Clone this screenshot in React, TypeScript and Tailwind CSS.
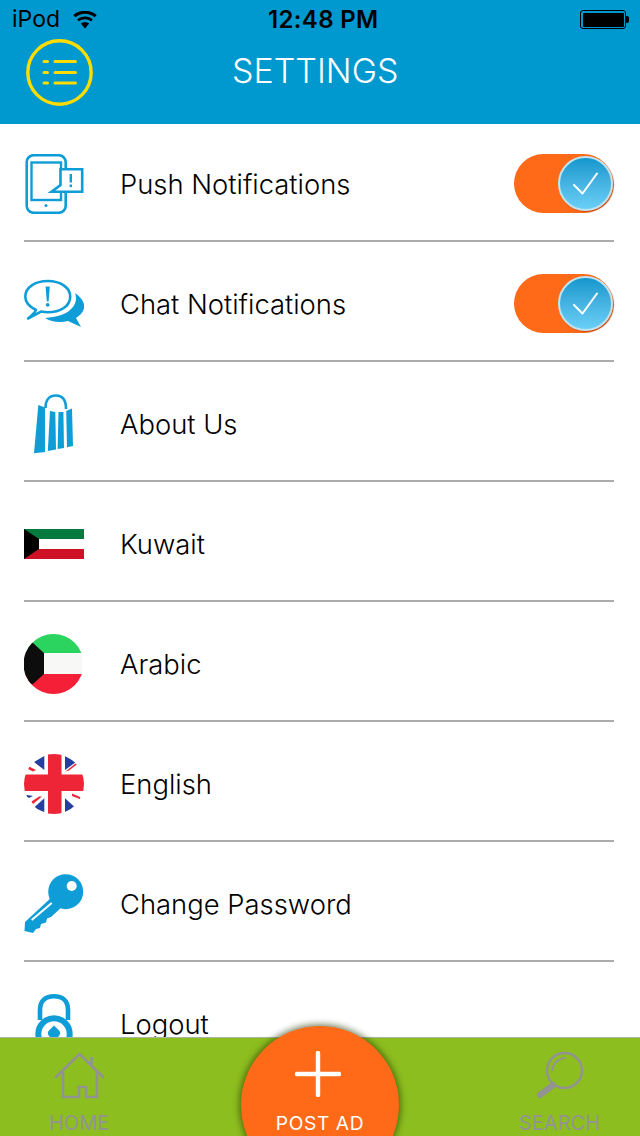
import React from "react";

const BLUE = "#0f9dd7";
const GRAY = "#939393";

function Box({ children }: { children: React.ReactNode }) {
  return (
    <svg width="60" height="60" viewBox="0 0 60 60" className="block shrink-0 overflow-hidden">
      {children}
    </svg>
  );
}

const PhoneIcon = () => (
  <Box>
    <rect x="2.7" y="1.2" width="39" height="57.6" rx="7" fill="none" stroke={BLUE} strokeWidth="2.6" />
    <rect x="7.5" y="8.5" width="29.5" height="37.5" fill="none" stroke={BLUE} strokeWidth="2.4" />
    <circle cx="22" cy="51.5" r="1.5" fill={BLUE} />
    <path d="M36.5 15.3H58.2V37.8H27.5L36.5 31Z" fill="#fff" stroke={BLUE} strokeWidth="2.6" strokeLinejoin="miter" />
    <rect x="45.6" y="20" width="2.4" height="8.5" fill={BLUE} />
    <rect x="45.6" y="30.5" width="2.4" height="2.6" fill={BLUE} />
  </Box>
);

const ChatIcon = () => (
  <Box>
    <path d="M51 19C58 24 61 29 60 34C59 39 55 42 52 44L57 53L44 47C36 49 27 48 21 44C32 43 42 41 48 34C52 30 53 24 51 19Z" fill={BLUE} />
    <path d="M12 36C4 32 1.3 27 1.3 22.7C1.3 13.5 11 7 23.7 7C36.4 7 46.2 13.5 46.2 22.7C46.2 32 36.4 38.3 23.7 38.3C21.5 38.3 19 38 17 37.6L4 44.5C8 41.5 10.5 39 12 36Z" fill="#fff" stroke={BLUE} strokeWidth="2.6" strokeLinejoin="round" />
    <path d="M21.6 12.5H25.8L24.6 27.5H22.8Z" fill={BLUE} />
    <circle cx="23.7" cy="30.8" r="1.9" fill={BLUE} />
  </Box>
);

const BagIcon = () => (
  <Box>
    <path d="M21.5 14C21.5 5 26 1.5 32 1.5C38 1.5 42 5.5 42 15" fill="none" stroke={BLUE} strokeWidth="2.6" />
    <path d="M14.3 11L21 13.5V58L10 59.3Z" fill={BLUE} />
    <path d="M26 17L31.3 18L32 55.5L23.8 57Z" fill={BLUE} />
    <path d="M34.5 18L39.4 18L40 54L33.6 55Z" fill={BLUE} />
    <path d="M42.2 17L48 14.5L49 52L43 53.3Z" fill={BLUE} />
  </Box>
);

const KuwaitFlag = () => (
  <Box>
    <rect x="0" y="15" width="60" height="10" fill="#047a3e" />
    <rect x="0" y="25" width="60" height="10" fill="#fff" />
    <rect x="0" y="35" width="60" height="10" fill="#ce1126" />
    <path d="M0 15L15 25V35L0 45Z" fill="#000" />
  </Box>
);

const KuwaitRound = () => (
  <Box>
    <defs>
      <clipPath id="kw">
        <circle cx="29.5" cy="30" r="30" />
      </clipPath>
    </defs>
    <g clipPath="url(#kw)">
      <rect x="0" y="0" width="58" height="19" fill="#2bd35f" />
      <rect x="0" y="19" width="58" height="21" fill="#f8f8f6" />
      <rect x="0" y="40" width="58" height="20" fill="#f51f37" />
      <path d="M-2 9H9L20 19V40L9 50H-2Z" fill="#0d0d0d" />
    </g>
  </Box>
);

const UKFlag = () => (
  <Box>
    <defs>
      <clipPath id="uk">
        <circle cx="30" cy="30" r="30" />
      </clipPath>
    </defs>
    <g clipPath="url(#uk)">
      <rect width="60" height="60" fill="#fff" />
      <path d="M20.3 2V16L10 8Z" fill="#243f9e" />
      <path d="M41 2V16L52 8Z" fill="#243f9e" />
      <path d="M20.3 58V44.3L9.3 54.3Z" fill="#243f9e" />
      <path d="M41 58V44.3L52 54.3Z" fill="#243f9e" />
      <path d="M4 12L12 16L9 17.5L3 14.5Z" fill="#ee2536" />
      <path d="M54 9.5L45 16.5L41.5 17.5L51.5 9.5Z" fill="#ee2536" />
      <path d="M3 41L9 42L5 44L2 42Z" fill="#243f9e" />
      <path d="M48 39.5L56 43L57 45.5L48 42Z" fill="#ee2536" />
      <path d="M18 42.5L9 50L7.5 47.5L15 42.5Z" fill="#ee2536" />
      <rect x="24" y="0" width="13.5" height="60" fill="#ee2536" />
      <rect x="0" y="20.5" width="60" height="16.5" fill="#ee2536" />
    </g>
  </Box>
);

const KeyIcon = () => (
  <Box>
    <path d="M29 22L1 48L0.5 57L9 59L12 55L16 54L17 50L22 48.5L23 44.5L27 43L40 31Z" fill={BLUE} />
    <circle cx="41.7" cy="17.7" r="17.5" fill={BLUE} />
    <circle cx="47.7" cy="12" r="5" fill="#fff" />
    <path d="M27.7 29L7.7 46" stroke="#fff" strokeWidth="2" />
  </Box>
);

const LockIcon = () => (
  <Box>
    <path d="M16 26V16C16 6 22 2.3 30 2.3C38 2.3 44 6 44 16V26" fill="none" stroke={BLUE} strokeWidth="4.6" />
    <circle cx="30" cy="40" r="15.7" fill="#fff" stroke={BLUE} strokeWidth="6" />
    <path d="M30 31.5L35.5 37C37 39 36 44 30 44C24 44 23 39 24.5 37Z" fill={BLUE} />
  </Box>
);

const Toggle = () => (
  <div className="relative h-[59px] w-[99px] rounded-full bg-[#ff6a19]">
    <div className="absolute left-[44px] top-[2px] h-[55px] w-[55px] rounded-full border-2 border-[#bfe3ef] bg-gradient-to-b from-[#0f97cd] to-[#69cff6] shadow-[1px_1px_1px_#c8470f]">
      <svg width="51" height="51" viewBox="0 0 51 51" className="block">
        <path d="M14 27L22.5 35.5L37 15.5" fill="none" stroke="#fff" strokeWidth="2" strokeLinecap="round" strokeLinejoin="round" />
      </svg>
    </div>
  </div>
);

const rows: { label: string; icon: React.ReactNode; toggle?: boolean }[] = [
  { label: "Push Notifications", icon: <PhoneIcon />, toggle: true },
  { label: "Chat Notifications", icon: <ChatIcon />, toggle: true },
  { label: "About Us", icon: <BagIcon /> },
  { label: "Kuwait", icon: <KuwaitFlag /> },
  { label: "Arabic", icon: <KuwaitRound /> },
  { label: "English", icon: <UKFlag /> },
  { label: "Change Password", icon: <KeyIcon /> },
  { label: "Logout", icon: <LockIcon /> },
];

export default function App() {
  return (
    <div className="relative flex h-[1136px] w-[640px] flex-col overflow-hidden bg-white font-['Inter','Liberation_Sans',sans-serif]">
      <header className="h-[124px] shrink-0 bg-[#0099cf]">
        <div className="relative flex h-[39px] items-center pl-[12px] pr-[11px] text-black">
          <span className="text-[23px] font-normal leading-none">iPod</span>
          <svg width="26" height="18" viewBox="0 0 26 18" className="ml-[12px]">
            <path d="M13 17.5L8.8 12.6C11.2 10.7 14.8 10.7 17.2 12.6Z" fill="#000" />
            <path d="M6.9 10.4L5.2 8.4C9.6 4.6 16.4 4.6 20.8 8.4L19.1 10.4C15.6 7.6 10.4 7.6 6.9 10.4Z" fill="#000" />
            <path d="M3.4 6.3L1.2 4C7.8 -1.6 18.2 -1.6 24.8 4L22.6 6.3C17 1.6 9 1.6 3.4 6.3Z" fill="#000" />
          </svg>
          <span className="absolute left-[268px] text-[24px] font-semibold leading-none tracking-[0.35px]">12:48 PM</span>
          <div className="ml-auto flex items-center">
            <div className="h-[19px] w-[46px] rounded-[3px] border border-black p-[1.5px]">
              <div className="h-full w-full rounded-[1px] bg-black" />
            </div>
            <div className="h-[7px] w-[3px] rounded-r-[2px] bg-black" />
          </div>
        </div>
        <div className="flex items-center pl-[26px]">
          <svg width="67" height="67" viewBox="0 0 67 67" className="block">
            <circle cx="33.5" cy="33.5" r="31.7" fill="none" stroke="#ffdc00" strokeWidth="3.4" />
            <g stroke="#ffdc00" strokeWidth="3" strokeLinecap="round">
              <path d="M18 22.5H21.5M18 33.5H21.5M18 44H21.5" />
              <path d="M29 22.5H49.5M29 33.5H49.5M29 44H49.5" />
            </g>
          </svg>
          <h1 className="mb-[4px] ml-[139px] text-[34px] font-light leading-none text-white">SETTINGS</h1>
        </div>
      </header>

      <main className="min-h-0 flex-1 overflow-hidden px-[24px] pr-[26px]">
        {rows.map((r, i) => (
          <div
            key={r.label}
            className={`flex items-end border-b-2 border-[#ababab] pb-[26px] ${i === 0 ? "h-[118px]" : "h-[120px]"}`}
          >
            <div className="flex h-[60px] w-full items-center">
              {r.icon}
              <span className="ml-[37px] mt-[2px] -translate-x-[1px] text-[27.4px] font-light leading-none text-black">{r.label}</span>
              {r.toggle && (
                <div className="mb-[2px] ml-auto mr-[1px]">
                  <Toggle />
                </div>
              )}
            </div>
          </div>
        ))}
      </main>

      <footer className="flex h-[99px] shrink-0 items-start justify-between border-t border-[#a9b5a0] bg-[#8dbe1f] pl-[49px] pr-[40px]">
        <div className="flex flex-col items-center pt-[14px]">
          <svg width="52" height="48" viewBox="0 0 52 48" className="block">
            <g fill="none" stroke={GRAY} strokeWidth="2.6">
              <path d="M3 25L26.5 2L50 25" strokeLinecap="round" strokeLinejoin="miter" />
              <path d="M10 20V45H26V35H33V45H44V20" />
              <path d="M38.5 5V14" />
            </g>
          </svg>
          <span className="mt-[13px] text-[20px] font-normal leading-none text-[#939393]">HOME</span>
        </div>
        <div className="flex flex-col items-center pt-[9px]">
          <svg width="50" height="52" viewBox="0 0 50 52" className="block">
            <circle cx="29.5" cy="23.5" r="17.5" fill="none" stroke={GRAY} strokeWidth="2.4" />
            <path d="M17.5 24C17.5 17 23 11.5 30.5 11" fill="none" stroke={GRAY} strokeWidth="2" />
            <path d="M18 38L5 48" stroke={GRAY} strokeWidth="6" strokeLinecap="round" />
          </svg>
          <span className="mt-[14px] text-[20px] font-normal leading-none text-[#939393]">SEARCH</span>
        </div>
      </footer>

      <div className="absolute left-[241px] top-[1026px] flex h-[158px] w-[158px] flex-col items-center rounded-full bg-[#ff6a19] shadow-[0_0_6px_2px_rgba(40,60,0,0.6)]">
        <svg width="46" height="46" viewBox="0 0 46 46" className="mt-[25px] -translate-x-[2px]">
          <path d="M23 2V44M2 23H44" stroke="#fff" strokeWidth="4.4" strokeLinecap="round" />
        </svg>
        <span className="mt-[17px] text-[19.2px] font-normal leading-none tracking-[0.6px] text-white">POST AD</span>
      </div>
    </div>
  );
}
